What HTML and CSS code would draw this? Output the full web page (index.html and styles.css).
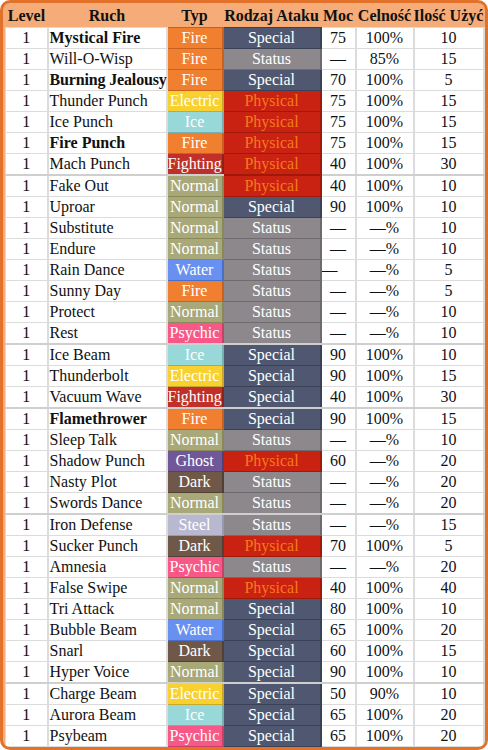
FILE: index.html
```html
<!DOCTYPE html>
<html>
<head>
<meta charset="utf-8">
<link rel="stylesheet" href="styles.css">
</head>
<body>
<div class="frame">
<table class="moves">
<colgroup>
<col class="c-lvl"><col class="c-name"><col class="c-type"><col class="c-cat"><col class="c-pow"><col class="c-acc"><col class="c-pp">
</colgroup>
<thead>
<tr><th>Level</th><th>Ruch</th><th>Typ</th><th>Rodzaj Ataku</th><th>Moc</th><th>Celność</th><th>Ilość Użyć</th></tr>
</thead>
<tbody>
<tr><td>1</td><td class="name stab">Mystical Fire</td><td class="t fire">Fire</td><td class="k special">Special</td><td>75</td><td>100%</td><td>10</td></tr>
<tr><td>1</td><td class="name">Will-O-Wisp</td><td class="t fire">Fire</td><td class="k status">Status</td><td>—</td><td>85%</td><td>15</td></tr>
<tr><td>1</td><td class="name stab tight">Burning Jealousy</td><td class="t fire">Fire</td><td class="k special">Special</td><td>70</td><td>100%</td><td>5</td></tr>
<tr><td>1</td><td class="name">Thunder Punch</td><td class="t electric">Electric</td><td class="k physical">Physical</td><td>75</td><td>100%</td><td>15</td></tr>
<tr><td>1</td><td class="name">Ice Punch</td><td class="t ice">Ice</td><td class="k physical">Physical</td><td>75</td><td>100%</td><td>15</td></tr>
<tr><td>1</td><td class="name stab">Fire Punch</td><td class="t fire">Fire</td><td class="k physical">Physical</td><td>75</td><td>100%</td><td>15</td></tr>
<tr class="gend"><td>1</td><td class="name">Mach Punch</td><td class="t fighting">Fighting</td><td class="k physical">Physical</td><td>40</td><td>100%</td><td>30</td></tr>
<tr><td>1</td><td class="name">Fake Out</td><td class="t normal">Normal</td><td class="k physical">Physical</td><td>40</td><td>100%</td><td>10</td></tr>
<tr><td>1</td><td class="name">Uproar</td><td class="t normal">Normal</td><td class="k special">Special</td><td>90</td><td>100%</td><td>10</td></tr>
<tr><td>1</td><td class="name">Substitute</td><td class="t normal">Normal</td><td class="k status">Status</td><td>—</td><td>—%</td><td>10</td></tr>
<tr><td>1</td><td class="name">Endure</td><td class="t normal">Normal</td><td class="k status">Status</td><td>—</td><td>—%</td><td>10</td></tr>
<tr><td>1</td><td class="name">Rain Dance</td><td class="t water">Water</td><td class="k status">Status</td><td class="left">—</td><td>—%</td><td>5</td></tr>
<tr><td>1</td><td class="name">Sunny Day</td><td class="t fire">Fire</td><td class="k status">Status</td><td>—</td><td>—%</td><td>5</td></tr>
<tr><td>1</td><td class="name">Protect</td><td class="t normal">Normal</td><td class="k status">Status</td><td>—</td><td>—%</td><td>10</td></tr>
<tr class="gend"><td>1</td><td class="name">Rest</td><td class="t psychic">Psychic</td><td class="k status">Status</td><td>—</td><td>—%</td><td>10</td></tr>
<tr><td>1</td><td class="name">Ice Beam</td><td class="t ice">Ice</td><td class="k special">Special</td><td>90</td><td>100%</td><td>10</td></tr>
<tr><td>1</td><td class="name">Thunderbolt</td><td class="t electric">Electric</td><td class="k special">Special</td><td>90</td><td>100%</td><td>15</td></tr>
<tr class="gend"><td>1</td><td class="name">Vacuum Wave</td><td class="t fighting">Fighting</td><td class="k special">Special</td><td>40</td><td>100%</td><td>30</td></tr>
<tr><td>1</td><td class="name stab">Flamethrower</td><td class="t fire">Fire</td><td class="k special">Special</td><td>90</td><td>100%</td><td>15</td></tr>
<tr><td>1</td><td class="name">Sleep Talk</td><td class="t normal">Normal</td><td class="k status">Status</td><td>—</td><td>—%</td><td>10</td></tr>
<tr><td>1</td><td class="name">Shadow Punch</td><td class="t ghost">Ghost</td><td class="k physical">Physical</td><td>60</td><td>—%</td><td>20</td></tr>
<tr><td>1</td><td class="name">Nasty Plot</td><td class="t dark">Dark</td><td class="k status">Status</td><td>—</td><td>—%</td><td>20</td></tr>
<tr class="gend"><td>1</td><td class="name">Swords Dance</td><td class="t normal">Normal</td><td class="k status">Status</td><td>—</td><td>—%</td><td>20</td></tr>
<tr><td>1</td><td class="name">Iron Defense</td><td class="t steel">Steel</td><td class="k status">Status</td><td>—</td><td>—%</td><td>15</td></tr>
<tr><td>1</td><td class="name">Sucker Punch</td><td class="t dark">Dark</td><td class="k physical">Physical</td><td>70</td><td>100%</td><td>5</td></tr>
<tr><td>1</td><td class="name">Amnesia</td><td class="t psychic">Psychic</td><td class="k status">Status</td><td>—</td><td>—%</td><td>20</td></tr>
<tr><td>1</td><td class="name">False Swipe</td><td class="t normal">Normal</td><td class="k physical">Physical</td><td>40</td><td>100%</td><td>40</td></tr>
<tr><td>1</td><td class="name">Tri Attack</td><td class="t normal">Normal</td><td class="k special">Special</td><td>80</td><td>100%</td><td>10</td></tr>
<tr><td>1</td><td class="name">Bubble Beam</td><td class="t water">Water</td><td class="k special">Special</td><td>65</td><td>100%</td><td>20</td></tr>
<tr><td>1</td><td class="name">Snarl</td><td class="t dark">Dark</td><td class="k special">Special</td><td>60</td><td>100%</td><td>15</td></tr>
<tr class="gend"><td>1</td><td class="name">Hyper Voice</td><td class="t normal">Normal</td><td class="k special">Special</td><td>90</td><td>100%</td><td>10</td></tr>
<tr><td>1</td><td class="name">Charge Beam</td><td class="t electric">Electric</td><td class="k special">Special</td><td>50</td><td>90%</td><td>10</td></tr>
<tr><td>1</td><td class="name">Aurora Beam</td><td class="t ice">Ice</td><td class="k special">Special</td><td>65</td><td>100%</td><td>20</td></tr>
<tr><td>1</td><td class="name">Psybeam</td><td class="t psychic">Psychic</td><td class="k special">Special</td><td>65</td><td>100%</td><td>20</td></tr>
</tbody>
</table>
</div>
</body>
</html>
```
FILE: styles.css
```css
html, body {
  margin: 0;
  padding: 0;
  background: #fff;
}
.frame {
  width: 488px;
  height: 750px;
  box-sizing: border-box;
  border: 3px solid #E2712A;
  border-radius: 10px;
  background: #F5AC78;
  padding: 2px;
  overflow: hidden;
}
.moves {
  width: 478px;
  table-layout: fixed;
  border-collapse: collapse;
  font-family: "Liberation Serif", "Times New Roman", Times, serif;
  font-size: 16px;
  color: #111;
}
.c-lvl { width: 42px; }
.c-name { width: 119px; }
.c-type { width: 56px; }
.c-cat { width: 98px; }
.c-pow { width: 35px; }
.c-acc { width: 58px; }
.c-pp { width: 70px; }
.moves th {
  font-weight: bold;
  height: 22px;
  padding: 0;
  text-align: center;
  white-space: nowrap;
  overflow: visible;
  background: #F5AC78;
  border: none;
  line-height: 18px;
}
.moves td {
  background: #fff;
  height: 20px;
  padding: 0;
  line-height: 18px;
  text-align: center;
  white-space: nowrap;
  overflow: hidden;
  border: 1px solid #DCDCDC;
  border-width: 1px 2px 1px 1px;
}
.moves tr.gend td {
  border-bottom: 2px solid #CFCFCF;
}
.moves td.name {
  text-align: left;
  padding-left: 1px;
  overflow: visible;
}
.moves td.stab { font-weight: bold; }
.moves td.tight { letter-spacing: -0.15px; }
.moves td.left { text-align: left; }
.moves td.t, .moves td.k {
  color: #fff;
}
.t.fire { background: #F08030; border-color: #C86020; }
.t.electric { background: #F8D030; border-color: #C8A828; }
.t.ice { background: #98D8D8; border-color: #78B0B0; }
.t.fighting { background: #C03028; border-color: #902020; }
.t.normal { background: #A8A878; border-color: #888858; }
.t.water { background: #6890F0; border-color: #4870C8; }
.t.psychic { background: #F85888; border-color: #C84068; }
.t.ghost { background: #705898; border-color: #504078; }
.t.dark { background: #705848; border-color: #504038; }
.t.steel { background: #B8B8D0; border-color: #9898B0; }
.k.special { background: #4F5870; border-color: #3A4258; }
.k.status { background: #8C888C; border-color: #6E6A6E; color: #F4F4F4; }
.moves td.k.physical { background: #C92112; border-color: #A01808; color: #F67A1A; }
```
